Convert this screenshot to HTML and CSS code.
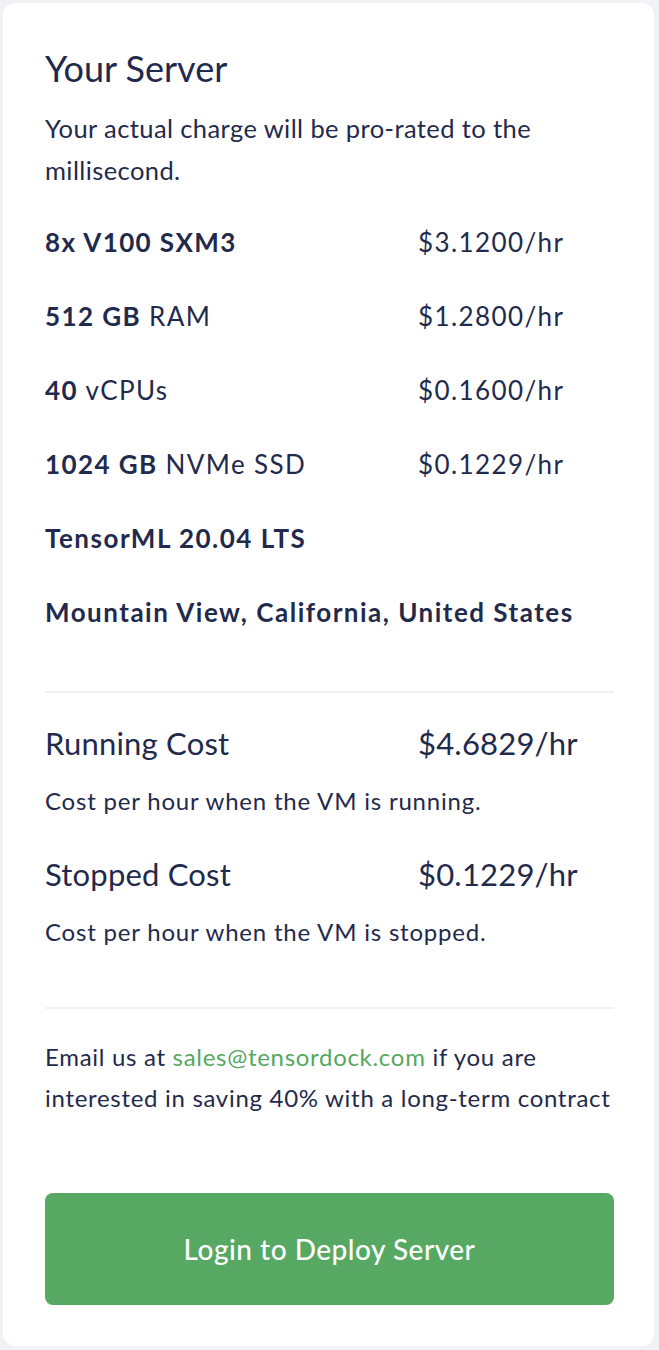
FILE: index.html
```html
<!DOCTYPE html>
<html lang="en">
<head>
<meta charset="UTF-8" />
<meta name="viewport" content="width=device-width, initial-scale=1" />
<title>Your Server</title>
<link rel="stylesheet" href="styles.css">
</head>
<body>

<section class="card">
  <h2 class="title">Your Server</h2>
  <p class="intro">Your actual charge will be pro-rated to the millisecond.</p>

  <div class="specs">
    <div class="spec"><span><b>8x V100 SXM3</b></span><span>$3.1200/hr</span></div>
    <div class="spec"><span><b>512 GB</b> RAM</span><span>$1.2800/hr</span></div>
    <div class="spec"><span><b>40</b> vCPUs</span><span>$0.1600/hr</span></div>
    <div class="spec"><span><b>1024 GB</b> NVMe SSD</span><span>$0.1229/hr</span></div>
    <div class="spec spec-wide"><b>TensorML 20.04 LTS</b></div>
    <div class="spec spec-wide"><b>Mountain View, California, United States</b></div>
  </div>

  <hr class="divider">

  <div class="cost">
    <div class="cost-row"><span>Running Cost</span><span>$4.6829/hr</span></div>
    <p class="cost-note">Cost per hour when the VM is running.</p>
  </div>
  <div class="cost">
    <div class="cost-row"><span>Stopped Cost</span><span>$0.1229/hr</span></div>
    <p class="cost-note">Cost per hour when the VM is stopped.</p>
  </div>

  <hr class="divider divider-bottom">

  <p class="contact">Email us at <a href="#">sales@tensordock.com</a> if you are interested in saving 40% with a long-term contract</p>

  <button class="deploy-btn">Login to Deploy Server</button>
</section>

</body>
</html>
```

FILE: styles.css
```css
* {
  box-sizing: border-box;
}
body {
  margin: 0;
  padding: 3px 5px 4px 3px;
  background-color: #f1f2f6;
  font-family: 'Lato', 'Open Sans', sans-serif;
  color: #1f2a4c;
}

.card {
  background-color: #fff;
  border-radius: 12px;
  padding: 43px 40px 41px 42px;
}

.title {
  margin: 0;
  font-size: 36px;
  line-height: 44px;
  font-weight: 400;
}

.intro {
  margin: 18px 0 0;
  font-size: 25.5px;
  line-height: 41.5px;
  letter-spacing: 0.4px;
}

.specs {
  margin-top: 34px;
  display: flex;
  flex-direction: column;
  gap: 40px;
}

.spec {
  display: grid;
  grid-template-columns: 373px 1fr;
  font-size: 26px;
  line-height: 34px;
  letter-spacing: 1.4px;
}
.spec b {
  font-weight: 700;
}
.spec-wide {
  display: block;
  letter-spacing: 1.5px;
}

.divider {
  margin: 62px 0 0;
  border: none;
  height: 2px;
  background-color: #f0f1f6;
}

.cost {
  margin-top: 30px;
}
.cost + .cost {
  margin-top: 37.5px;
}

.cost-row {
  display: grid;
  grid-template-columns: 373px 1fr;
  font-size: 31px;
  line-height: 40px;
  letter-spacing: 0.2px;
}

.cost-note {
  margin: 23px 0 0;
  font-size: 24px;
  line-height: 30px;
  letter-spacing: 0.8px;
}

.divider-bottom {
  margin-top: 60.5px;
}

.contact {
  margin: 26.5px 0 0;
  font-size: 24px;
  line-height: 41.7px;
  letter-spacing: 0.7px;
}
.contact a {
  color: #55a860;
  text-decoration: none;
}

.deploy-btn {
  display: block;
  width: 100%;
  height: 112px;
  margin-top: 74.5px;
  border: none;
  border-radius: 8px;
  background-color: #57a862;
  color: #fff;
  font-family: inherit;
  font-size: 28px;
  font-weight: 500;
  letter-spacing: 0.5px;
  cursor: pointer;
}
```
